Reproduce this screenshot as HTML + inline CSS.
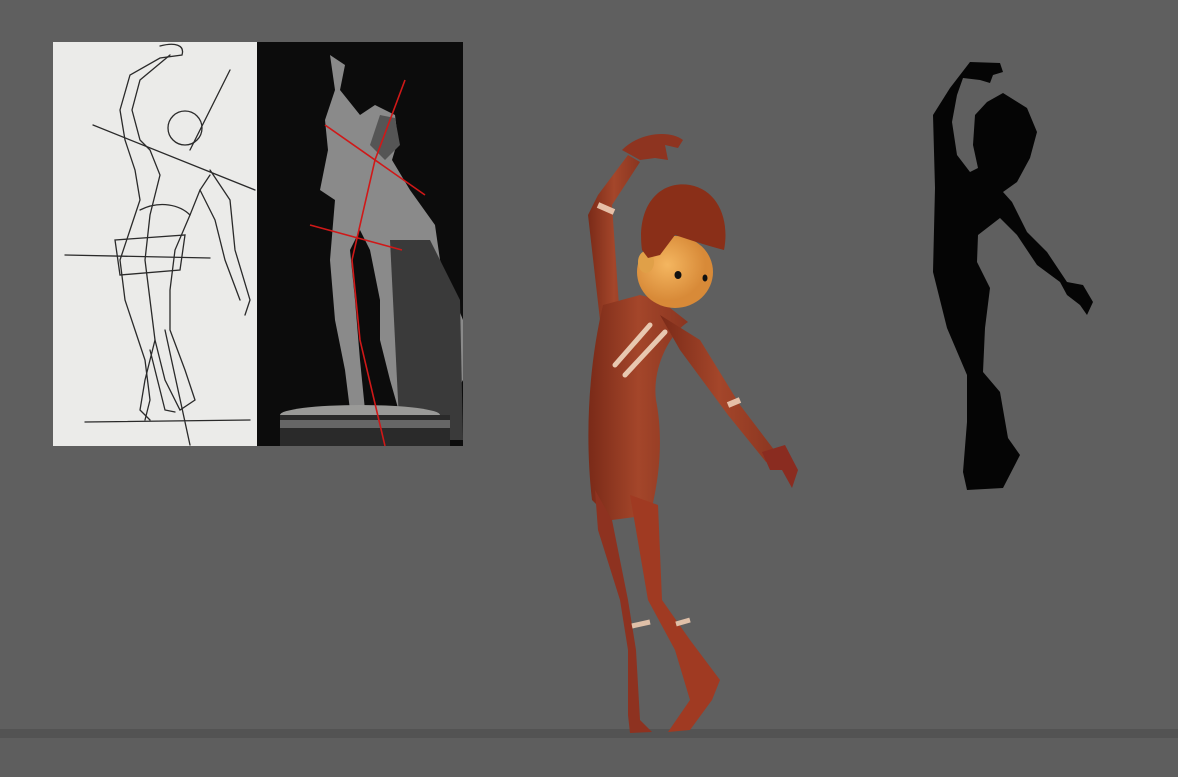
<!DOCTYPE html>
<html><head><meta charset="utf-8"><style>
html,body{margin:0;padding:0;background:#5f5f5f;width:1178px;height:777px;overflow:hidden}
svg{display:block}
</style></head><body>
<svg width="1178" height="777" viewBox="0 0 1178 777" xmlns="http://www.w3.org/2000/svg">
<defs>
<linearGradient id="bd" x1="0" x2="1"><stop offset="0" stop-color="#7a2a18"/><stop offset=".5" stop-color="#a4462a"/><stop offset="1" stop-color="#8a3520"/></linearGradient>
<radialGradient id="fc" cx=".4" cy=".4"><stop offset="0" stop-color="#f4b660"/><stop offset="1" stop-color="#d88a38"/></radialGradient>
</defs>
<rect width="1178" height="777" fill="#5f5f5f"/>
<rect y="729" width="1178" height="9" fill="#535353"/>
<rect y="738" width="1178" height="39" fill="#5e5e5e"/>

<rect x="53" y="42" width="204" height="404" fill="#ebebe9"/>
<g fill="none" stroke="#2a2a2a" stroke-width="1.3" stroke-linecap="round">
<path d="M160 46 C175 42 185 45 182 55 L160 58 L130 75 L120 110 L125 140 L135 170 L140 200 L130 230 L120 260 L125 300 L135 330 L145 360 L150 400 L145 420"/>
<path d="M170 55 L140 80 L132 110 L140 140 L150 150 L160 175 L150 215 L145 260 L150 300 L155 340 L165 380 L180 410 L195 400 L185 370 L170 330 L170 290 L175 250 L190 215 L200 190 L210 175"/>
<circle cx="185" cy="128" r="17"/>
<path d="M93 125 L255 190 M210 170 L230 200 L235 250 L250 300 L245 315 M200 190 L215 220 L225 260 L240 300"/>
<path d="M65 255 L210 258 M85 422 L250 420 M165 330 L190 445 M230 70 L190 150"/>
<path d="M115 240 L185 235 L180 270 L120 275 Z M140 210 C160 200 180 205 190 215"/>
<path d="M150 350 L165 410 L175 412 M155 340 L145 380 L140 410 L150 420"/>
</g>

<rect x="257" y="42" width="206" height="404" fill="#0c0c0c"/>
<path d="M330 55 L345 65 L340 90 L360 115 L375 105 L395 115 L398 140 L392 160 L410 190 L435 225 L440 260 L455 300 L463 320 L463 380 L440 420 L400 415 L390 380 L380 340 L380 300 L370 250 L360 230 L350 250 L355 300 L360 360 L365 410 L350 410 L345 370 L335 320 L330 260 L335 200 L320 190 L328 150 L325 120 L335 90 Z" fill="#8a8a8a"/>
<path d="M390 240 L430 240 L460 300 L463 440 L400 440 Z" fill="#3a3a3a"/>
<path d="M380 115 L395 118 L400 145 L385 160 L370 145 Z" fill="#555"/>
<ellipse cx="360" cy="415" rx="80" ry="10" fill="#9a9a98"/>
<rect x="280" y="415" width="170" height="31" fill="#2a2a2a"/>
<rect x="280" y="420" width="170" height="8" fill="#666"/>
<g stroke="#d01818" stroke-width="1.6" fill="none">
<path d="M405 80 L375 160 L352 260 L360 340 L385 446"/>
<path d="M325 125 L425 195 M310 225 L402 250"/>
</g>

<g>
<path d="M600 320 L588 215 L598 195 L628 155 L640 162 L612 205 L620 320 Z" fill="url(#bd)"/>
<path d="M622 150 C640 132 670 130 683 140 L678 148 L665 145 L668 160 L655 158 L640 160 Z" fill="#8e3420"/>
<path d="M598 205 L614 212" stroke="#e6c0a8" stroke-width="6"/>
<path d="M603 305 C590 360 584 430 592 500 L612 520 L650 515 C662 470 662 430 656 400 C652 370 668 335 688 322 L660 300 L640 295 Z" fill="url(#bd)"/>
<path d="M660 315 L700 340 L740 405 L778 455 L766 462 L728 415 L680 350 Z" fill="url(#bd)"/>
<path d="M762 452 L785 445 L798 470 L792 488 L782 470 L770 470 Z" fill="#8a2c20"/>
<path d="M728 405 L740 400" stroke="#e6c0a8" stroke-width="6"/>
<path d="M615 365 L650 325 M625 375 L665 332" stroke="#e8c8b0" stroke-width="5" stroke-linecap="round"/>
<path d="M595 490 L612 520 L628 600 L636 650 L640 720 L652 732 L630 733 L628 715 L628 650 L620 600 L598 530 Z" fill="#8e3220"/>
<path d="M630 495 L658 505 L662 600 L690 640 L720 680 L712 700 L690 730 L668 732 L690 700 L675 650 L648 600 Z" fill="#a03a22"/>
<path d="M632 626 L650 622 M676 624 L690 620" stroke="#e0c0a8" stroke-width="5"/>
<ellipse cx="675" cy="272" rx="38" ry="36" fill="url(#fc)"/>
<ellipse cx="646" cy="262" rx="8" ry="11" fill="#e0a048"/>
<path d="M642 250 C636 205 660 180 690 185 C718 190 730 220 724 250 C705 245 690 240 675 235 L660 255 L648 258 Z" fill="#8a2f18"/>
<ellipse cx="678" cy="275" rx="3.5" ry="4" fill="#111"/>
<ellipse cx="705" cy="278" rx="2.5" ry="3.5" fill="#111"/>
</g>

<path fill="#050505" d="M970 62 L1000 63 L1003 72 L993 75 L990 83 L980 80 L963 78 L957 95 L952 122 L957 155 L970 172 L978 168 L973 145 L975 115 L987 102 L1003 93 L1027 108 L1037 132 L1030 158 L1017 182 L1003 192 L1012 202 L1027 232 L1047 252 L1067 282 L1083 285 L1093 302 L1087 315 L1080 305 L1067 295 L1060 282 L1037 265 L1017 235 L1000 218 L978 235 L977 262 L990 288 L985 328 L983 372 L1000 392 L1008 438 L1020 455 L1003 488 L967 490 L963 472 L967 422 L967 375 L947 328 L933 272 L935 188 L933 115 L950 88 Z"/>
</svg>
</body></html>
